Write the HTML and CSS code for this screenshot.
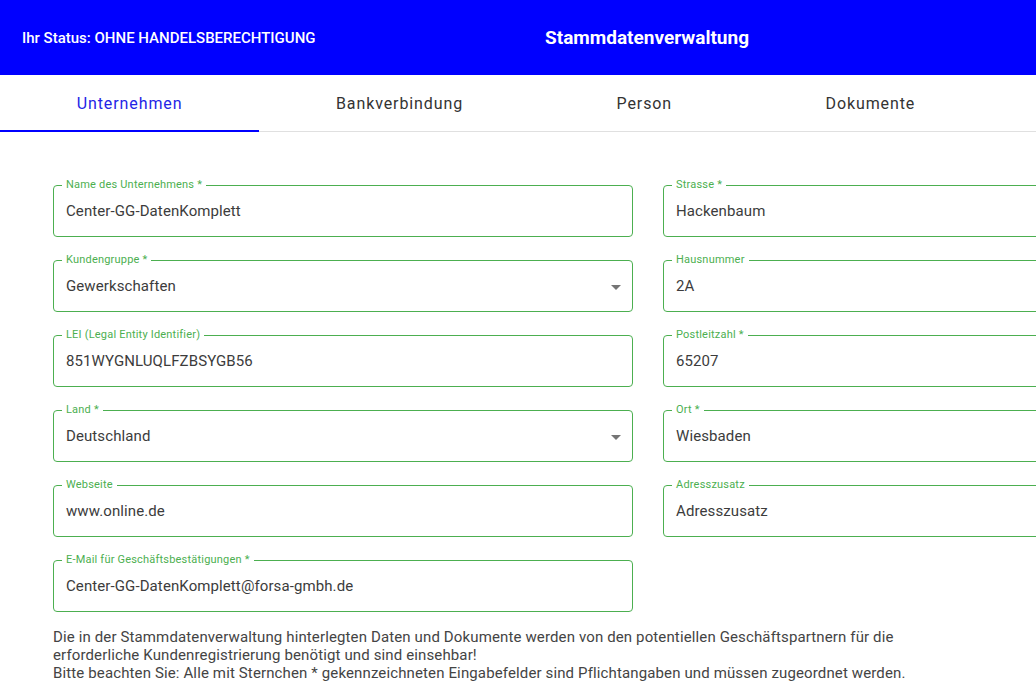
FILE: index.html
```html
<!DOCTYPE html>
<html lang="de">
<head>
<meta charset="utf-8">
<title>Stammdatenverwaltung</title>
<link rel="stylesheet" href="styles.css">
</head>
<body>
<header class="topbar">
  <div class="status">Ihr Status: OHNE HANDELSBERECHTIGUNG</div>
  <div class="title">Stammdatenverwaltung</div>
</header>
<nav class="tabs">
  <div class="tablist">
    <div class="tab active">Unternehmen</div>
    <div class="tab">Bankverbindung</div>
    <div class="tab">Person</div>
    <div class="tab">Dokumente</div>
  </div>
</nav>
<main class="content">
  <div class="form">
    <div class="col">
      <fieldset class="field"><legend>Name des Unternehmens *</legend><div class="value">Center-GG-DatenKomplett</div></fieldset>
      <fieldset class="field select"><legend>Kundengruppe *</legend><div class="value">Gewerkschaften</div><span class="arrow"></span></fieldset>
      <fieldset class="field"><legend>LEI (Legal Entity Identifier)</legend><div class="value">851WYGNLUQLFZBSYGB56</div></fieldset>
      <fieldset class="field select"><legend>Land *</legend><div class="value">Deutschland</div><span class="arrow"></span></fieldset>
      <fieldset class="field"><legend>Webseite</legend><div class="value">www.online.de</div></fieldset>
      <fieldset class="field"><legend>E-Mail für Geschäftsbestätigungen *</legend><div class="value">Center-GG-DatenKomplett@forsa-gmbh.de</div></fieldset>
    </div>
    <div class="col">
      <fieldset class="field"><legend>Strasse *</legend><div class="value">Hackenbaum</div></fieldset>
      <fieldset class="field"><legend>Hausnummer</legend><div class="value">2A</div></fieldset>
      <fieldset class="field"><legend>Postleitzahl *</legend><div class="value">65207</div></fieldset>
      <fieldset class="field"><legend>Ort *</legend><div class="value">Wiesbaden</div></fieldset>
      <fieldset class="field"><legend>Adresszusatz</legend><div class="value">Adresszusatz</div></fieldset>
    </div>
  </div>
  <p class="note">Die in der Stammdatenverwaltung hinterlegten Daten und Dokumente werden von den potentiellen Geschäftspartnern für die erforderliche Kundenregistrierung benötigt und sind einsehbar!<br>Bitte beachten Sie: Alle mit Sternchen * gekennzeichneten Eingabefelder sind Pflichtangaben und müssen zugeordnet werden.</p>
</main>
</body>
</html>
```

FILE: styles.css
```css
html, body {
  margin: 0;
  padding: 0;
  overflow: hidden;
  background: #ffffff;
  font-family: Roboto, "Liberation Sans", Arial, sans-serif;
}

.topbar {
  height: 75px;
  background: #0000ff;
  color: #ffffff;
  display: flex;
  align-items: center;
}

.status {
  width: 545px;
  padding-left: 22px;
  box-sizing: border-box;
  font-size: 15px;
  font-weight: 500;
}

.title {
  font-size: 19px;
  font-weight: 700;
}

.tabs {
  height: 56px;
  border-bottom: 1px solid #e0e0e0;
}

.tablist {
  display: flex;
  width: 992px;
  height: 100%;
}

.tab {
  flex: 1 1 auto;
  display: flex;
  align-items: center;
  justify-content: center;
  font-size: 16px;
  font-weight: 400;
  letter-spacing: 0.9px;
  color: #333333;
  box-sizing: border-box;
}

.tab.active {
  color: #2424e6;
  border-bottom: 2px solid #0000ff;
  margin-bottom: -1px;
  padding-top: 1px;
}

.content {
  padding: 47px 0 0 53px;
}

.form {
  display: grid;
  grid-template-columns: 580px 580px;
  column-gap: 30px;
  width: 1200px;
}

.col {
  display: flex;
  flex-direction: column;
  gap: 17px;
}

.field {
  position: relative;
  margin: 0;
  padding: 0 12px;
  height: 58px;
  box-sizing: border-box;
  border: 1px solid #4caf50;
  border-radius: 4px;
}

.field legend {
  font-size: 11px;
  line-height: 12px;
  letter-spacing: 0.2px;
  color: #4caf50;
  padding: 0 4px;
  margin-left: -4px;
}

.value {
  font-size: 15px;
  letter-spacing: 0.1px;
  line-height: 40px;
  color: #3c3c3c;
}

.arrow {
  position: absolute;
  right: 11px;
  top: 19px;
  width: 0;
  height: 0;
  border-left: 5px solid transparent;
  border-right: 5px solid transparent;
  border-top: 5px solid #757575;
}

.note {
  margin: 16px 0 0 0;
  width: 900px;
  font-size: 15px;
  letter-spacing: 0.13px;
  line-height: 18px;
  color: #444444;
}
```
